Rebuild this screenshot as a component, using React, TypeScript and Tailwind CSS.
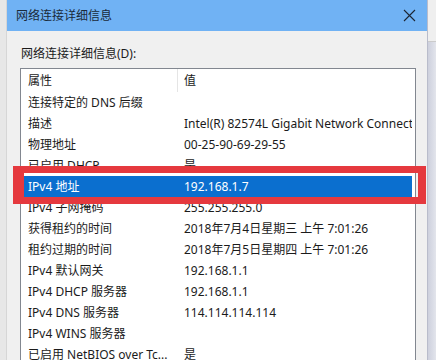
const rows: { name: string; value: string; selected?: boolean }[] = [
  { name: "连接特定的 DNS 后缀", value: "" },
  { name: "描述", value: "Intel(R) 82574L Gigabit Network Connection" },
  { name: "物理地址", value: "00-25-90-69-29-55" },
  { name: "已启用 DHCP", value: "是" },
  { name: "IPv4 地址", value: "192.168.1.7", selected: true },
  { name: "IPv4 子网掩码", value: "255.255.255.0" },
  { name: "获得租约的时间", value: "2018年7月4日星期三 上午 7:01:26" },
  { name: "租约过期的时间", value: "2018年7月5日星期四 上午 7:01:26" },
  { name: "IPv4 默认网关", value: "192.168.1.1" },
  { name: "IPv4 DHCP 服务器", value: "192.168.1.1" },
  { name: "IPv4 DNS 服务器", value: "114.114.114.114" },
  { name: "IPv4 WINS 服务器", value: "" },
  { name: "已启用 NetBIOS over Tc...", value: "是" },
];

export default function App() {
  return (
    <div className="relative flex w-[436px] h-[360px] overflow-hidden bg-[#e6e6e6] font-['Noto_Sans','Noto_Sans_CJK_SC',sans-serif] text-[12px] text-[#1b1b1b]">
      {/* desktop behind, left */}
      <div className="w-[7px] shrink-0 bg-[#e7e7e7] border-r border-[#d6d6d6]" />

      {/* dialog */}
      <div className="flex flex-col w-[420px] shrink-0 bg-[#f0f0f0]">
        <div className="h-[31px] shrink-0 flex items-center justify-between pl-[9px] pr-[11px] bg-[#70b2f4]">
          <span className="text-[#1a2a3a]">网络连接详细信息</span>
          <svg width="13" height="13" viewBox="0 0 13 13">
            <path d="M1 1 L12 12 M12 1 L1 12" stroke="#1c2533" strokeWidth="1.1" fill="none" />
          </svg>
        </div>

        <div className="flex flex-col pt-[15px] pl-[13px] pr-[11px]">
          <div className="h-[16px] flex items-center pl-[1px] leading-none">网络连接详细信息(D):</div>

          <div className="mt-[6px] border border-[#828790] bg-white">
            <div className="flex h-[23px] items-center">
              <div className="w-[156px] pl-[7px]">属性</div>
              <div className="w-px h-full bg-[#e5e5e5]" />
              <div className="pl-[6px]">值</div>
            </div>
            {rows.map((r) => (
              <div
                key={r.name}
                className={
                  r.selected
                    ? "flex h-[21px] items-center ml-[2px] mr-[3px] bg-[#0b6fcf] text-white"
                    : "flex h-[21px] items-center ml-[2px] mr-[3px]"
                }
              >
                <div className="w-[154px] shrink-0 pl-[5px] whitespace-nowrap overflow-hidden">{r.name}</div>
                <div className="flex-1 pl-[7px] whitespace-nowrap overflow-hidden">{r.value}</div>
              </div>
            ))}
          </div>
        </div>
      </div>

      {/* desktop behind, right */}
      <div className="flex flex-col flex-1 border-l border-[#b9bccb] bg-gradient-to-r from-[#cdd0dd] to-[#e3e5ec]">
        <div className="h-[42px] bg-[#efefef] border-b border-[#cbcbcb]" />
      </div>

      {/* red highlight annotation */}
      <div className="absolute left-[13px] top-[166px] w-[413px] h-[38px] border-[#e5393e] border-t-[7px] border-b-[7px] border-l-[11px] border-r-[8px]" />
    </div>
  );
}
